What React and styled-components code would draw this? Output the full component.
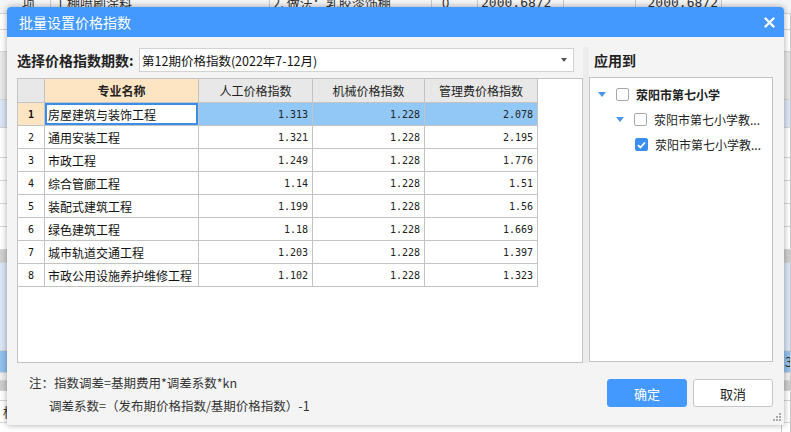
import React from "react"
import styled, { createGlobalStyle } from "styled-components"

const GlobalStyle = createGlobalStyle`
  html, body {
    margin: 0;
    padding: 0;
    width: 791px;
    height: 432px;
    overflow: hidden;
    font-family: "Noto Sans CJK SC", "Noto Sans", sans-serif;
  }
`

const Screen = styled.div`
  position: relative;
  width: 791px;
  height: 432px;
  overflow: hidden;
  background: #fff;
`

/* ---- the app behind the dialog ---- */

const BgSheet = styled.div`
  display: flex;
  flex-direction: column;
  margin-top: -8px;
`

const BgBand = styled.div`
  display: flex;
  align-items: center;
  height: ${(p) => p.$h}px;
  background: ${(p) => p.$bg || "#fff"};
  border-bottom: 1px solid ${(p) => p.$line || "#d6d6d6"};
  box-sizing: border-box;
  font-size: 13px;
  color: #333;
`

const BgCell = styled.div`
  width: ${(p) => p.$w}px;
  height: 100%;
  display: flex;
  align-items: center;
  justify-content: ${(p) => (p.$right ? "flex-end" : "flex-start")};
  padding: 0 3px 0 ${(p) => p.$pl || 3}px;
  box-sizing: border-box;
  border-right: 1px solid #c8c8c8;
  white-space: nowrap;
  overflow: hidden;
  font-family: ${(p) => (p.$mono ? '"DejaVu Sans Mono", monospace' : "inherit")};
`

/* ---- dialog ---- */

const Dialog = styled.div`
  position: absolute;
  left: 7px;
  top: 7px;
  width: 777px;
  height: 418px;
  background: #f4f4f4;
  border-radius: 4px 4px 2px 2px;
  box-shadow: 0 0 6px rgba(0, 0, 0, 0.35);
  display: flex;
  flex-direction: column;
  overflow: hidden;
`

const TitleBar = styled.div`
  height: 30px;
  flex: none;
  background: #4399fd;
  display: flex;
  align-items: center;
  justify-content: space-between;
  padding: 0 8px 0 12px;
  color: #fff;
  font-size: 14px;
`

const CloseBtn = styled.div`
  width: 14px;
  height: 14px;
  display: flex;
  align-items: center;
  justify-content: center;
`

const Body = styled.div`
  display: flex;
  flex: none;
  padding: 11px 11px 0 10px;
`

const LeftPane = styled.div`
  width: 566px;
  display: flex;
  flex-direction: column;
  gap: 6px;
`

const Splitter = styled.div`
  width: 6px;
  background: #ececec;
  margin-top: -1px;
`

const RightPane = styled.div`
  width: 184px;
  display: flex;
  flex-direction: column;
  gap: 5px;
`

const FieldRow = styled.div`
  height: 24px;
  display: flex;
  align-items: center;
`

const BoldLabel = styled.div`
  font-size: 14px;
  font-weight: bold;
  color: #222;
  width: 122px;
  padding-left: ${(p) => p.$pad || 0}px;
`

const Select = styled.div`
  flex: 1;
  height: 24px;
  margin-right: 9px;
  box-sizing: border-box;
  border: 1px solid #d2d2d2;
  background: #fff;
  display: flex;
  align-items: center;
  justify-content: space-between;
  padding: 0 6px 0 2px;
  font-size: 12.5px;
  color: #111;
`

const Caret = styled.span`
  width: 0;
  height: 0;
  border-left: 3px solid transparent;
  border-right: 3px solid transparent;
  border-top: 4px solid #555;
`

const GridBox = styled.div`
  height: 285px;
  background: #fff;
  border: 1px solid #c3c3c3;
  box-sizing: border-box;
`

const Table = styled.table`
  border-collapse: collapse;
  table-layout: fixed;
  width: 520px;
  margin-top: -1px;
  margin-left: -1px;
`

const Th = styled.th`
  height: 23px;
  padding: 0;
  border: 1px solid #c3c3c3;
  background: ${(p) => (p.$hot ? "#fde4c2" : "#e8e8e8")};
  font-size: 12px;
  font-weight: ${(p) => (p.$hot ? "bold" : "normal")};
  color: #222;
  text-align: center;
`

const Td = styled.td`
  height: 23px;
  padding: 0 4px 0 3px;
  box-sizing: border-box;
  border: 1px solid #c3c3c3;
  background: ${(p) => (p.$sel ? "#92c8f6" : "#fff")};
  font-size: 12px;
  color: #111;
  text-align: left;
  white-space: nowrap;
  overflow: hidden;
`

const NumTd = styled(Td)`
  text-align: right;
  font-family: "DejaVu Sans Mono", monospace;
  font-size: 10px;
  color: #222;
`

const IdxTd = styled(Td)`
  text-align: center;
  padding: 0;
  background: ${(p) => (p.$sel ? "#fde4c2" : "#fff")};
  font-family: "DejaVu Sans Mono", monospace;
  font-weight: ${(p) => (p.$sel ? "bold" : "normal")};
  font-size: 10px;
`

const FocusTd = styled(Td)`
  box-shadow: inset 0 0 0 2px #3b8de9;
`

const TreeBox = styled.div`
  height: 285px;
  background: #fff;
  border: 1px solid #c3c3c3;
  box-sizing: border-box;
  padding-top: 4px;
`

const TreeRow = styled.div`
  height: 25px;
  display: flex;
  align-items: center;
  padding-left: ${(p) => p.$indent}px;
  gap: 7px;
  font-size: 12px;
  font-weight: ${(p) => (p.$bold ? "bold" : "normal")};
  color: #222;
  white-space: nowrap;
`

const Toggle = styled.span`
  width: 0;
  height: 0;
  margin-right: 3px;
  border-left: 4px solid transparent;
  border-right: 4px solid transparent;
  border-top: 5px solid ${(p) => (p.$hide ? "transparent" : "#4a95ea")};
`

const Check = styled.span`
  width: 13px;
  height: 13px;
  box-sizing: border-box;
  border-radius: 2px;
  border: 1px solid ${(p) => (p.$on ? "#3d8ef0" : "#a8a8a8")};
  background: ${(p) => (p.$on ? "#3d8ef0" : "#fff")};
  display: flex;
  align-items: center;
  justify-content: center;
`

const Footer = styled.div`
  flex: 1;
  display: flex;
  justify-content: space-between;
  padding: 11px 11px 0 22px;
`

const Notes = styled.div`
  display: flex;
  flex-direction: column;
  gap: 6px;
  font-size: 12.5px;
  color: #333;
`

const NoteLine = styled.div`
  padding-left: ${(p) => p.$pad || 0}px;
  line-height: 17px;
`

const Buttons = styled.div`
  display: flex;
  gap: 6px;
  padding-top: 5px;
`

const Button = styled.div`
  width: 80px;
  height: 28px;
  box-sizing: border-box;
  border-radius: 3px;
  border: 1px solid ${(p) => (p.$primary ? "#4399fd" : "#c6c6c6")};
  background: ${(p) => (p.$primary ? "#4399fd" : "#fff")};
  color: ${(p) => (p.$primary ? "#fff" : "#222")};
  font-size: 13px;
  display: flex;
  align-items: center;
  justify-content: center;
`

const Grip = styled.svg`
  position: absolute;
  right: 3px;
  bottom: 4px;
`

const rows = [
  ["房屋建筑与装饰工程", "1.313", "1.228", "2.078"],
  ["通用安装工程", "1.321", "1.228", "2.195"],
  ["市政工程", "1.249", "1.228", "1.776"],
  ["综合管廊工程", "1.14", "1.228", "1.51"],
  ["装配式建筑工程", "1.199", "1.228", "1.56"],
  ["绿色建筑工程", "1.18", "1.228", "1.669"],
  ["城市轨道交通工程", "1.203", "1.228", "1.397"],
  ["市政公用设施养护维修工程", "1.102", "1.228", "1.323"],
]

const bands = [
  { h: 22, bg: "#f3f4f6", top: true },
  { h: 16 },
  { h: 22 },
  { h: 48, bg: "#e8e8e8" },
  { h: 28, bg: "#dce6f6" },
  { h: 30 },
  { h: 23 },
  { h: 23 },
  { h: 23 },
  { h: 23 },
  { h: 13, bg: "#cfcfcf" },
  { h: 88, bg: "#dbe5f5" },
  { h: 22, bg: "#92c1ee", txt: "3" },
  { h: 8, bg: "#efefef" },
  { h: 10, bg: "#cdcdcd" },
  { h: 10 },
  { h: 22, txt: "柞" },
  { h: 20 },
]

const App = () => {
  return (
    <Screen>
      <GlobalStyle />
      <BgSheet>
        {bands.map((b, i) =>
          b.top ? (
            <BgBand key={i} $h={b.h} $bg={b.bg}>
              <BgCell $w={51} $pl={22}>项</BgCell>
              <BgCell $w={219}>工棚喷刷涂料</BgCell>
              <BgCell $w={162}>2. 做法：乳胶漆饰棚</BgCell>
              <BgCell $w={46} $pl={10}>0</BgCell>
              <BgCell $w={86} $mono>2000.6872</BgCell>
              <BgCell $w={72} />
              <BgCell $w={86} $mono $right>2000.6872</BgCell>
            </BgBand>
          ) : (
            <BgBand key={i} $h={b.h} $bg={b.bg}>
              <BgCell $w={782}>{b.txt === "柞" ? "柞" : ""}</BgCell>
              <BgCell $w={9}>{b.txt === "3" ? "3" : ""}</BgCell>
            </BgBand>
          )
        )}
      </BgSheet>

      <Dialog>
        <TitleBar>
          <span>批量设置价格指数</span>
          <CloseBtn>
            <svg width="11" height="11" viewBox="0 0 11 11">
              <path d="M1.5 1.5 L9.5 9.5 M9.5 1.5 L1.5 9.5" stroke="#fff" strokeWidth="2.4" strokeLinecap="round" />
            </svg>
          </CloseBtn>
        </TitleBar>

        <Body>
          <LeftPane>
            <FieldRow>
              <BoldLabel>选择价格指数期数:</BoldLabel>
              <Select>
                <span>第12期价格指数(2022年7-12月)</span>
                <Caret />
              </Select>
            </FieldRow>
            <GridBox>
              <Table>
                <colgroup>
                  <col style={{ width: 27 }} />
                  <col style={{ width: 154 }} />
                  <col style={{ width: 114 }} />
                  <col style={{ width: 112 }} />
                  <col style={{ width: 113 }} />
                </colgroup>
                <thead>
                  <tr>
                    <Th />
                    <Th $hot>专业名称</Th>
                    <Th>人工价格指数</Th>
                    <Th>机械价格指数</Th>
                    <Th>管理费价格指数</Th>
                  </tr>
                </thead>
                <tbody>
                  {rows.map((r, i) => {
                    const sel = i === 0
                    const NameCell = sel ? FocusTd : Td
                    return (
                      <tr key={i}>
                        <IdxTd $sel={sel}>{i + 1}</IdxTd>
                        <NameCell>{r[0]}</NameCell>
                        <NumTd $sel={sel}>{r[1]}</NumTd>
                        <NumTd $sel={sel}>{r[2]}</NumTd>
                        <NumTd $sel={sel}>{r[3]}</NumTd>
                      </tr>
                    )
                  })}
                </tbody>
              </Table>
            </GridBox>
          </LeftPane>

          <Splitter />

          <RightPane>
            <FieldRow>
              <BoldLabel $pad={5}>应用到</BoldLabel>
            </FieldRow>
            <TreeBox>
              <TreeRow $indent={8} $bold>
                <Toggle />
                <Check />
                <span>荥阳市第七小学</span>
              </TreeRow>
              <TreeRow $indent={26}>
                <Toggle />
                <Check />
                <span>荥阳市第七小学教...</span>
              </TreeRow>
              <TreeRow $indent={27}>
                <Toggle $hide />
                <Check $on>
                  <svg width="9" height="8" viewBox="0 0 9 8">
                    <path d="M1 4.2 L3.4 6.5 L8 1.5" stroke="#fff" strokeWidth="1.8" fill="none" />
                  </svg>
                </Check>
                <span>荥阳市第七小学教...</span>
              </TreeRow>
            </TreeBox>
          </RightPane>
        </Body>

        <Footer>
          <Notes>
            <NoteLine>注：指数调差=基期费用*调差系数*kn</NoteLine>
            <NoteLine $pad={20}>调差系数=（发布期价格指数/基期价格指数）-1</NoteLine>
          </Notes>
          <Buttons>
            <Button $primary>确定</Button>
            <Button>取消</Button>
          </Buttons>
        </Footer>

        <Grip width="8" height="8" viewBox="0 0 8 8">
          <rect x="6" y="0" width="2" height="2" fill="#a8a8a8" />
          <rect x="3" y="3" width="2" height="2" fill="#a8a8a8" />
          <rect x="6" y="3" width="2" height="2" fill="#a8a8a8" />
          <rect x="0" y="6" width="2" height="2" fill="#a8a8a8" />
          <rect x="3" y="6" width="2" height="2" fill="#a8a8a8" />
          <rect x="6" y="6" width="2" height="2" fill="#a8a8a8" />
        </Grip>
      </Dialog>
    </Screen>
  )
}

export default App
